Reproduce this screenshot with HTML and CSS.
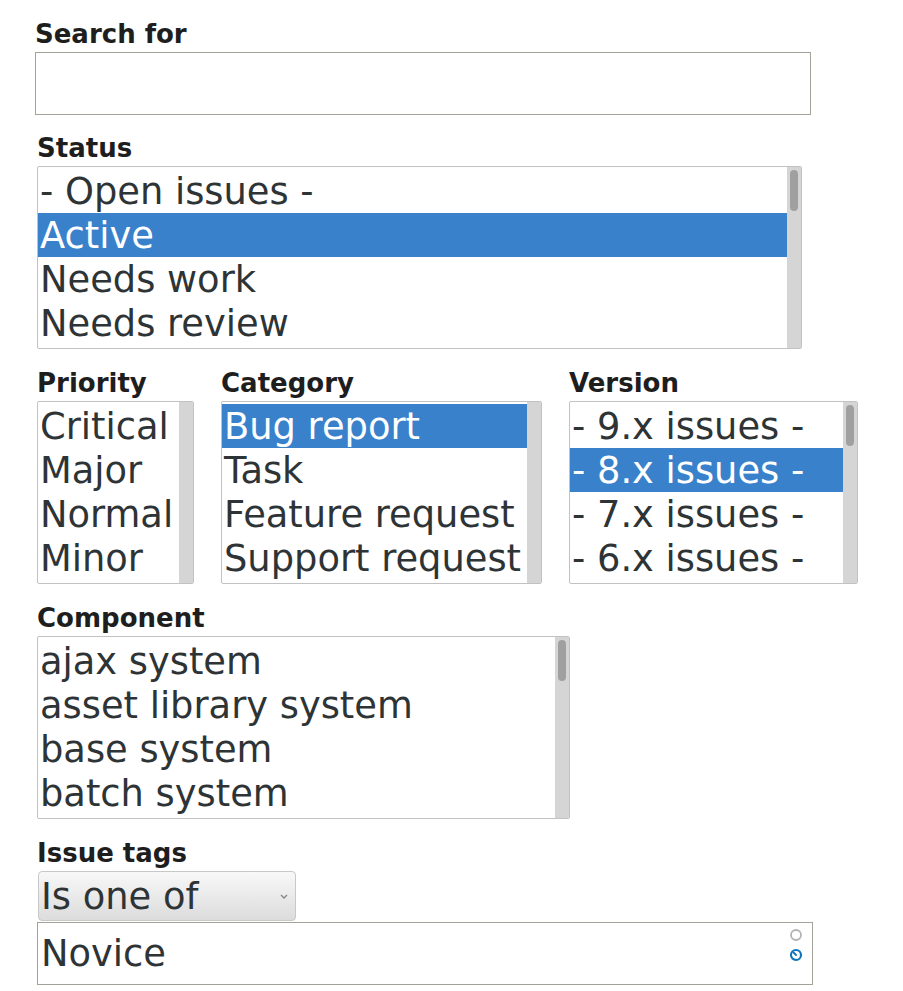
FILE: index.html
```html
<!DOCTYPE html>
<html lang="en">
<head>
<meta charset="utf-8">
<title>Issue search</title>
<link rel="stylesheet" href="styles.css">
</head>
<body>
<form class="page">
  <div class="item item-search">
    <label class="label">Search for</label>
    <div class="text-input"></div>
  </div>

  <div class="item item-status">
    <label class="label">Status</label>
    <div class="listbox lb-status">
      <div class="options">
        <div class="opt">- Open issues -</div>
        <div class="opt sel">Active</div>
        <div class="opt">Needs work</div>
        <div class="opt">Needs review</div>
      </div>
      <div class="track"><div class="thumb"></div></div>
    </div>
  </div>

  <div class="item row">
    <div class="col">
      <label class="label">Priority</label>
      <div class="listbox lb-priority">
        <div class="options">
          <div class="opt">Critical</div>
          <div class="opt">Major</div>
          <div class="opt">Normal</div>
          <div class="opt">Minor</div>
        </div>
        <div class="track"></div>
      </div>
    </div>
    <div class="col">
      <label class="label">Category</label>
      <div class="listbox lb-category">
        <div class="options">
          <div class="opt sel">Bug report</div>
          <div class="opt">Task</div>
          <div class="opt">Feature request</div>
          <div class="opt">Support request</div>
        </div>
        <div class="track"></div>
      </div>
    </div>
    <div class="col">
      <label class="label">Version</label>
      <div class="listbox lb-version">
        <div class="options">
          <div class="opt">- 9.x issues -</div>
          <div class="opt sel">- 8.x issues -</div>
          <div class="opt">- 7.x issues -</div>
          <div class="opt">- 6.x issues -</div>
        </div>
        <div class="track"><div class="thumb"></div></div>
      </div>
    </div>
  </div>

  <div class="item">
    <label class="label">Component</label>
    <div class="listbox lb-component">
      <div class="options">
        <div class="opt">ajax system</div>
        <div class="opt">asset library system</div>
        <div class="opt">base system</div>
        <div class="opt">batch system</div>
      </div>
      <div class="track"><div class="thumb"></div></div>
    </div>
  </div>

  <div class="item">
    <label class="label">Issue tags</label>
    <div class="dropdown">
      <span>Is one of</span>
      <svg class="chevron" width="8" height="5" viewBox="0 0 8 5"><path d="M1 1 L4 4 L7 1" fill="none" stroke="#858585" stroke-width="1.3"/></svg>
    </div>
    <div class="text-input tags-input">
      <span class="value">Novice</span>
      <svg class="throbber" width="14" height="34" viewBox="0 0 14 34">
        <circle cx="7" cy="7" r="5" fill="none" stroke="#b4b4b4" stroke-width="1.8"/>
        <circle cx="7" cy="27" r="5" fill="none" stroke="#0a74bc" stroke-width="2.1"/>
        <path d="M7 27 L4.4 24.4" stroke="#0a74bc" stroke-width="1.9" stroke-linecap="round"/>
      </svg>
    </div>
  </div>
</form>
</body>
</html>
```

FILE: styles.css
```css
html, body {
  margin: 0;
  padding: 0;
  background: #ffffff;
}

.page {
  padding: 18px 0 0 37px;
  font-family: "DejaVu Sans", "Liberation Sans", sans-serif;
  color: #2e3436;
}

.item {
  margin-top: 18px;
}

.item-search {
  margin-top: 0;
  margin-left: -2px;
}

.item-status {
  margin-top: 17px;
}

.label {
  display: block;
  font-size: 26px;
  line-height: 30px;
  padding-top: 1px;
  font-weight: bold;
  color: #1e1e1e;
  margin-bottom: 3px;
}

.text-input {
  box-sizing: border-box;
  width: 776px;
  height: 63px;
  border: 1px solid #a2a299;
  background: #ffffff;
}

.tags-input {
  position: relative;
  margin-top: 1px;
  display: flex;
  align-items: center;
  padding: 0 3px;
  font-size: 36.8px;
  color: #2e3436;
}

.tags-input .value {
  line-height: 43px;
}

.throbber {
  position: absolute;
  right: 9px;
  top: 5px;
}

.listbox {
  box-sizing: border-box;
  display: flex;
  height: 183px;
  border: 1px solid #c2c2c2;
  border-radius: 2px;
  background: #ffffff;
  overflow: hidden;
}

.options {
  flex: 1;
  min-width: 0;
  padding: 2px 0 3px;
}

.opt {
  height: 44px;
  line-height: 45px;
  padding: 0 2px;
  font-size: 36.8px;
  white-space: nowrap;
  overflow: hidden;
  color: #2e3436;
}

.opt.sel {
  background: #3a81cc;
  color: #ffffff;
}

.track {
  width: 14px;
  flex: none;
  background: #d5d5d5;
  padding-top: 3px;
}

.thumb {
  width: 8px;
  height: 41px;
  margin-left: 3px;
  border-radius: 4px;
  background: #a0a0a0;
}

.lb-status { width: 765px; }
.lb-priority { width: 157px; }
.lb-category { width: 321px; }
.lb-version { width: 289px; }
.lb-component { width: 533px; }

.row {
  display: flex;
  gap: 27px;
}

.dropdown {
  box-sizing: border-box;
  width: 258px;
  height: 50px;
  margin-left: 1px;
  display: flex;
  align-items: center;
  justify-content: space-between;
  padding: 0 7px 0 2px;
  border: 1px solid #c8c8c8;
  border-radius: 4px;
  background: linear-gradient(#f8f8f8, #dcdcdc);
  font-size: 36.8px;
  line-height: 43px;
  color: #2e3436;
}
```
